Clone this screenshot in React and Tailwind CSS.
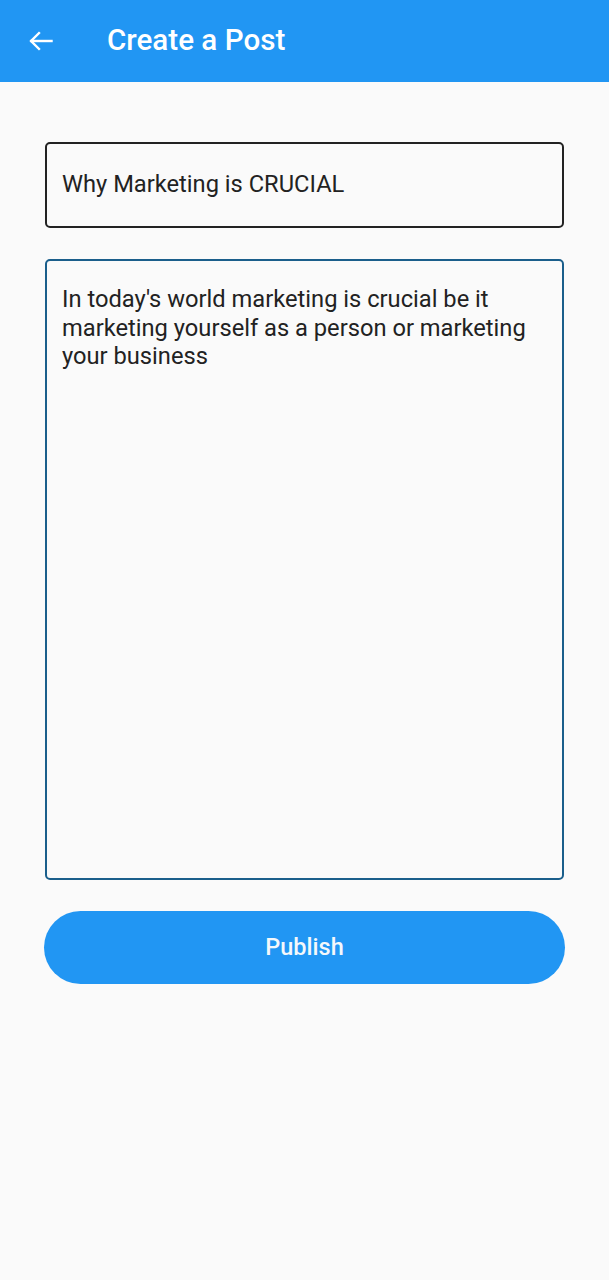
export default function App() {
  return (
    <div className="min-h-[1280px] w-full bg-[#fafafa] font-['Roboto',sans-serif]">
      <header className="h-[82px] bg-[#2196f3] flex items-center">
        <div className="w-[107px] flex items-center pl-[27px]">
          <svg width="28" height="28" viewBox="0 0 24 24" fill="none" stroke="white" strokeWidth="2.1" strokeLinecap="square">
            <path d="M21 12H4" />
            <path d="M11 4.5L3.5 12L11 19.5" strokeLinecap="butt" />
          </svg>
        </div>
        <h1 className="text-white text-[29.6px] font-medium leading-none">Create a Post</h1>
      </header>
      <main className="px-[45px] pt-[60px] flex flex-col">
        <div className="h-[86px] border-2 border-[#222] rounded-[5px] flex items-center px-[15px]">
          <span className="text-[23.7px] text-[#222] leading-none">Why Marketing is CRUCIAL</span>
        </div>
        <div className="mt-[31px] h-[621px] border-2 border-[#1a5e8b] rounded-[5px] px-[15px] pt-[24px]">
          <p className="text-[23.7px] text-[#222] leading-[28.5px]">
            In today's world marketing is crucial be it marketing yourself as a person or marketing your business
          </p>
        </div>
        <button className="mt-[31px] h-[73px] -ml-px w-[521px] rounded-full bg-[#2196f3] text-[#f4f8fb] text-[23.5px] font-medium flex items-center justify-center">
          Publish
        </button>
      </main>
    </div>
  );
}
